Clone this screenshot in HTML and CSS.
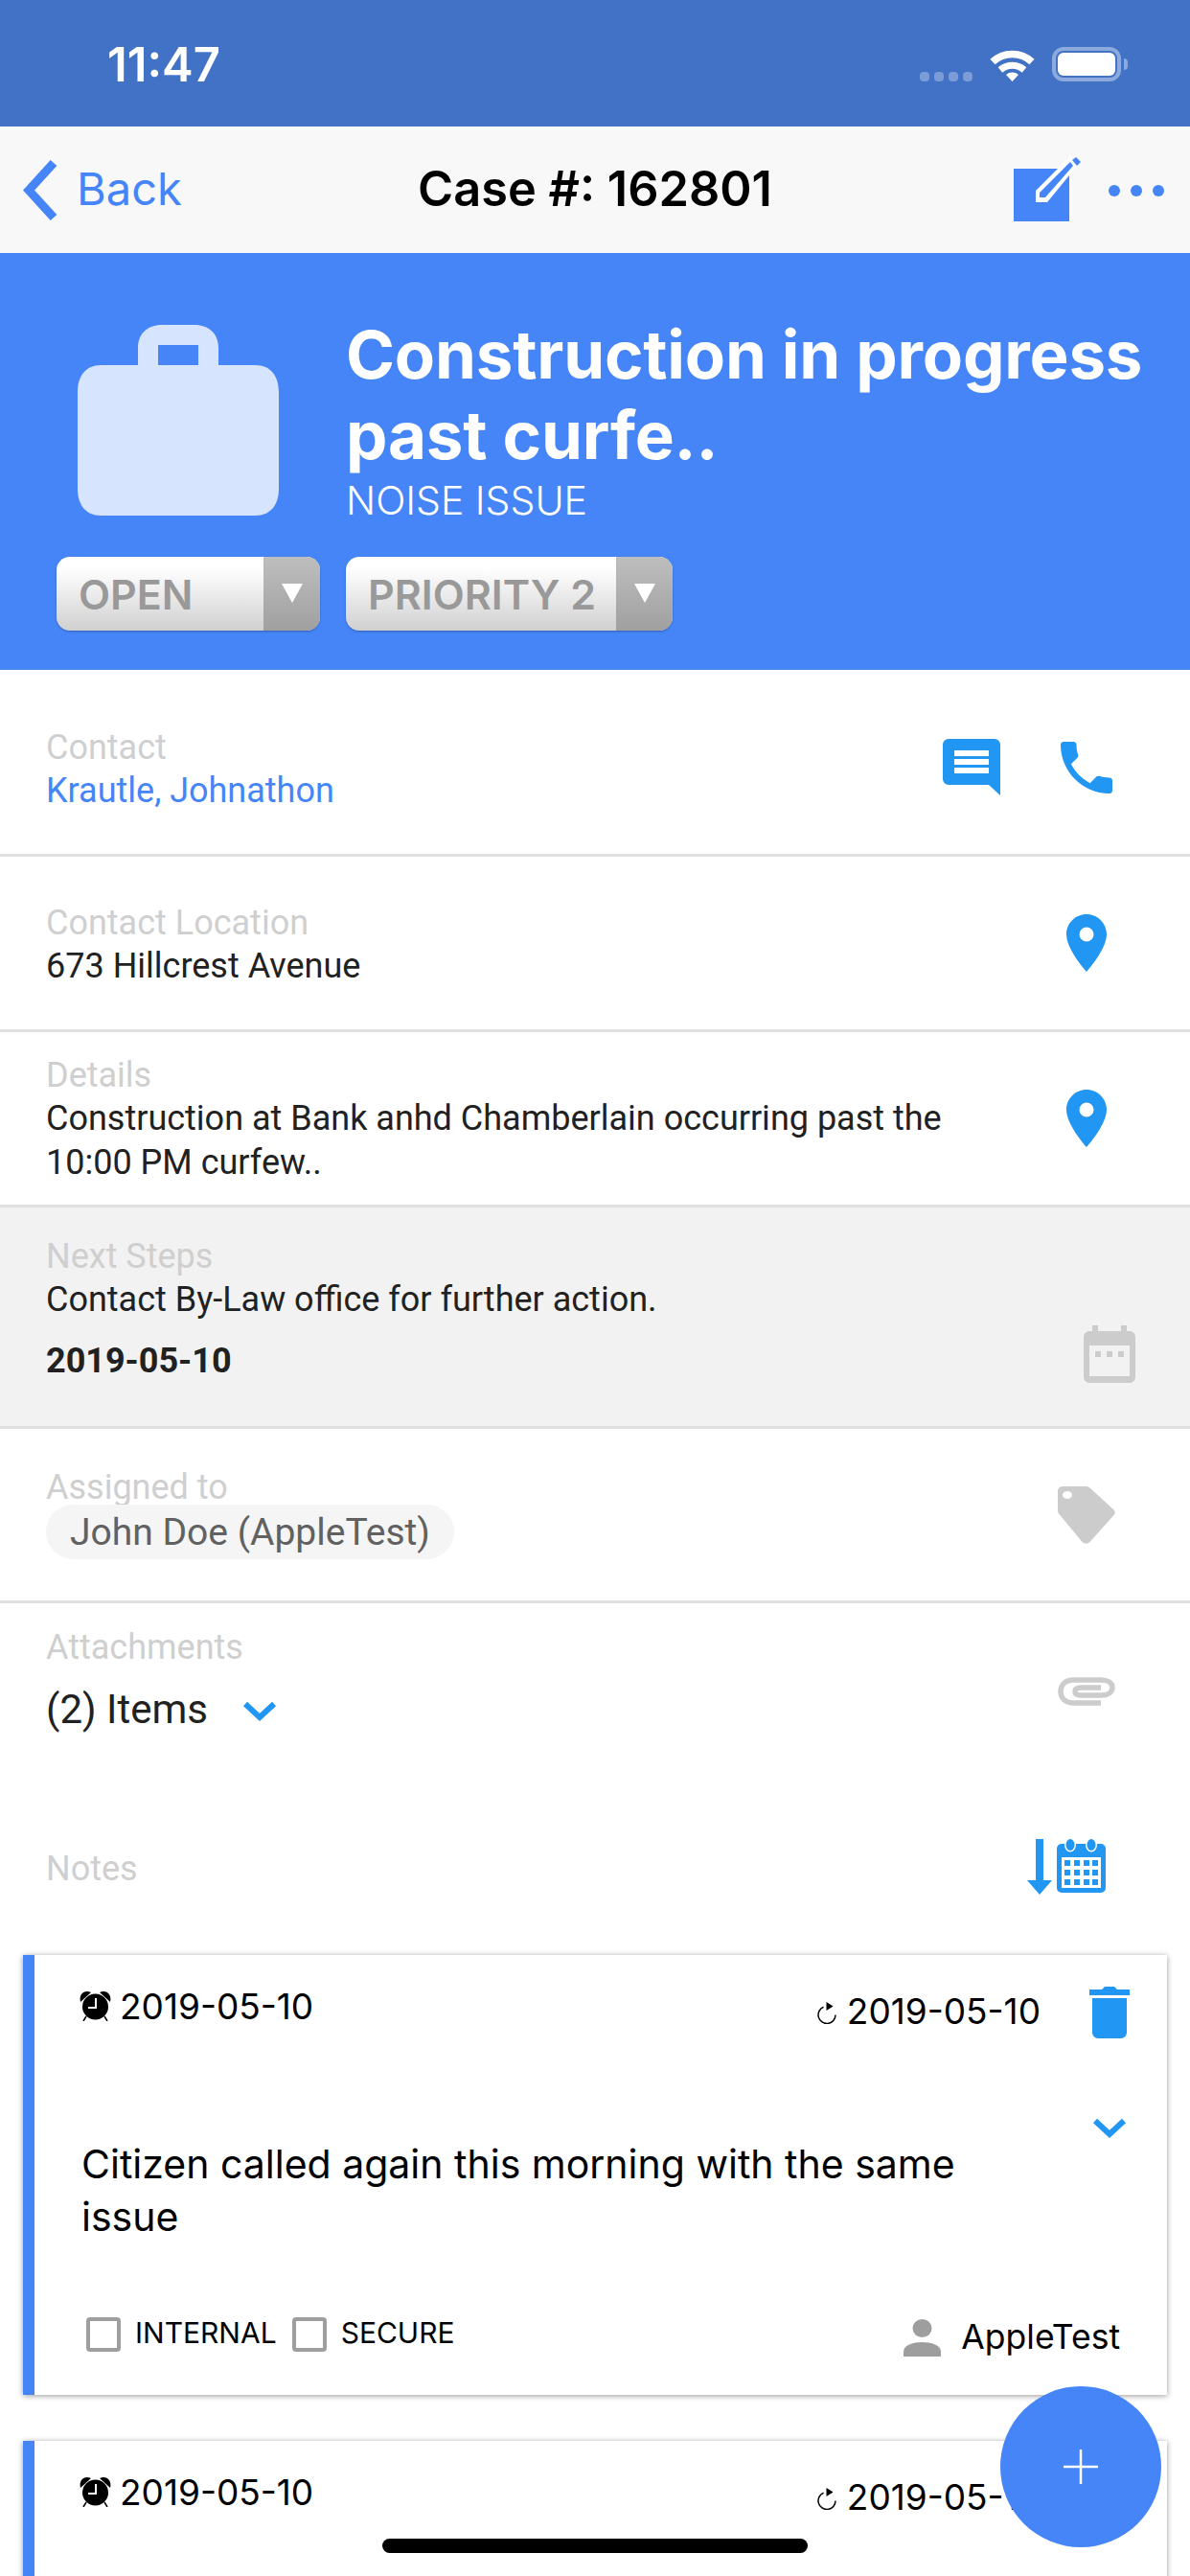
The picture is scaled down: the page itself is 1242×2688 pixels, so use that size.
FILE: index.html
```html
<!DOCTYPE html>
<html lang="en">
<head>
<meta charset="utf-8">
<title>Case #: 162801</title>
<link rel="stylesheet" href="styles.css">
</head>
<body>
<div class="page">
  <header class="statusbar">
    <span class="clock">11:47</span>
    <div class="status-icons">
      <div class="signal"><i></i><i></i><i></i><i></i></div>
      <svg class="wifi" viewBox="1032 49 50 36"><path d="M1036 64.500a30 30 0 0 1 41 0" fill="none" stroke="#fff" stroke-width="7.500"/><path d="M1044 73a19 19 0 0 1 25 0" fill="none" stroke="#fff" stroke-width="7"/><path d="M1050 78a10 10 0 0 1 13 0l-6.500 7z" fill="#fff"/></svg>
      <div class="battery"><div class="battery-fill"></div></div>
      <div class="battery-nub"></div>
    </div>
  </header>

  <nav class="navbar">
    <div class="nav-back">
      <svg class="back-chevron" viewBox="0 0 38 63"><path d="M32 3 6 31.500 32 60" fill="none" stroke="#4585f7" stroke-width="9"/></svg>
      <span>Back</span>
    </div>
    <div class="nav-title">Case #: 162801</div>
    <div class="nav-actions">
      <svg class="edit-icon" viewBox="1057 160 73 72"><rect x="1057" y="176" width="58" height="55" fill="#4585f7"/><path d="M1080 199 1116 163 1124 172 1092 211H1080z" fill="#fff"/><path d="M1084 201 1116 169 1119 173 1090 206H1084z" fill="#4585f7"/><path d="M1118 167l4-3 5 5-4 4z" fill="#4585f7"/></svg>
      <svg class="more-icon" viewBox="0 0 58 12"><circle cx="6" cy="6" r="6"/><circle cx="29" cy="6" r="6"/><circle cx="52" cy="6" r="6"/></svg>
    </div>
  </nav>

  <section class="hero">
    <div class="hero-top">
      <svg class="briefcase" viewBox="0 0 210 199"><path d="M63 42V24C63 9 73 0 88 0h34c15 0 25 9 25 24v18h39c15 0 24 11 24 28v101c0 17-9 28-24 28H24C9 199 0 188 0 171V70c0-17 9-28 24-28zm21 0h42V21H84z" fill="#d6e4fe" fill-rule="evenodd"/></svg>
      <div class="hero-text">
        <h1 class="hero-title">Construction in progress<br>past curfe..</h1>
        <div class="hero-sub">NOISE ISSUE</div>
      </div>
    </div>
    <div class="hero-selects">
      <div class="select select-status"><span class="select-label">OPEN</span><span class="select-arrow"><i></i></span></div>
      <div class="select select-priority"><span class="select-label">PRIORITY 2</span><span class="select-arrow"><i></i></span></div>
    </div>
  </section>

  <section class="row row-contact">
    <div>
      <div class="label">Contact</div>
      <div class="value value-link">Krautle, Johnathon</div>
    </div>
    <div class="row-icons">
      <svg class="icon-chat" viewBox="0 0 60 59"><path d="M6 0h48a6 6 0 0 1 6 6v53L48 48H6a6 6 0 0 1-6-6V6a6 6 0 0 1 6-6z" fill="#2196f3"/><path d="M12 12h36v6H12zM12 21h36v6H12zM12 30h36v6H12z" fill="#fff"/></svg>
      <svg class="icon-phone" viewBox="3 3 18 18"><path class="blue" d="M6.620 10.790c1.440 2.830 3.760 5.140 6.590 6.590l2.200-2.200c.27-.27.67-.36 1.020-.24 1.120.37 2.330.57 3.570.57.55 0 1 .45 1 1V20c0 .55-.45 1-1 1-9.390 0-17-7.610-17-17 0-.55.45-1 1-1h3.500c.55 0 1 .45 1 1 0 1.250.2 2.450.57 3.570.11.35.03.74-.25 1.020l-2.200 2.200z"/></svg>
    </div>
  </section>

  <section class="row row-location">
    <div>
      <div class="label">Contact Location</div>
      <div class="value">673 Hillcrest Avenue</div>
    </div>
    <div class="row-icons">
      <svg class="icon-pin" viewBox="5 2 14 20"><path class="blue" fill-rule="evenodd" d="M12 2C8.130 2 5 5.130 5 9c0 5.250 7 13 7 13s7-7.750 7-13c0-3.870-3.130-7-7-7zm0 9.500a2.500 2.500 0 0 1 0-5 2.500 2.500 0 0 1 0 5z"/></svg>
    </div>
  </section>

  <section class="row row-details">
    <div>
      <div class="label">Details</div>
      <div class="value">Construction at Bank anhd Chamberlain occurring past the<br>10:00 PM curfew..</div>
    </div>
    <div class="row-icons">
      <svg class="icon-pin" viewBox="5 2 14 20"><path class="blue" fill-rule="evenodd" d="M12 2C8.130 2 5 5.130 5 9c0 5.250 7 13 7 13s7-7.750 7-13c0-3.870-3.130-7-7-7zm0 9.500a2.500 2.500 0 0 1 0-5 2.500 2.500 0 0 1 0 5z"/></svg>
    </div>
  </section>

  <section class="row row-next">
    <div>
      <div class="label">Next Steps</div>
      <div class="value">Contact By-Law office for further action.</div>
      <div class="value value-date">2019-05-10</div>
    </div>
    <div class="row-icons">
      <svg class="icon-cal" viewBox="0 0 54 60"><path d="M9 0h6v6h24V0h6v6h3a6 6 0 0 1 6 6v42a6 6 0 0 1-6 6H6a6 6 0 0 1-6-6V12a6 6 0 0 1 6-6h3z" fill="#ccc"/><path d="M6 21h42v32H6z" fill="#f2f2f2"/><path d="M12 27h6v6h-6zM24 27h6v6h-6zM36 27h6v6h-6z" fill="#ccc"/></svg>
    </div>
  </section>

  <section class="row row-assigned">
    <div>
      <div class="label">Assigned to</div>
      <div class="chip">John Doe (AppleTest)</div>
    </div>
    <div class="row-icons">
      <svg class="icon-tag" viewBox="0 0 60 60"><path d="M5 0h24c2 0 3 .5 4.500 1.500l25 23c1.500 1.500 1.500 4 0 5.500l-25 28c-2 2-6 2-8 0L1.500 29C.5 28 0 27 0 25V5a5 5 0 0 1 5-5zm5 5a5 4 0 1 0 .01 0z" fill="#ccc" fill-rule="evenodd"/></svg>
    </div>
  </section>

  <section class="row row-attachments">
    <div>
      <div class="label">Attachments</div>
      <div class="items"><span>(2) Items</span>
        <svg class="items-chevron" viewBox="0 0 36 22"><path d="M3 3 18 17 33 3" fill="none" stroke="#2196f3" stroke-width="6"/></svg>
      </div>
    </div>
    <div class="row-icons">
      <svg class="icon-clip" viewBox="0 0 60 34"><path d="M45 29H16C8 29 3 24 3 17S8 5 16 5h29c7 0 12 3 12 8s-5 8-12 8H24c-4 0-6-1.500-6-4s2-4 6-4h21" fill="none" stroke="#ccc" stroke-width="5.500"/></svg>
    </div>
  </section>

  <section class="row row-notes">
    <div class="label">Notes</div>
    <div class="row-icons">
      <svg class="icon-notes" viewBox="1072 1918 82 59"><path class="blue" d="M1081 1919h8v43h9l-13 15-13-15h9z"/><rect class="blue" x="1103" y="1924" width="51" height="51" rx="5"/><ellipse cx="1117" cy="1925" rx="6" ry="7.500" fill="#fff"/><ellipse cx="1139" cy="1925" rx="6" ry="7.500" fill="#fff"/><ellipse class="blue" cx="1117" cy="1925" rx="4.500" ry="6"/><ellipse class="blue" cx="1139" cy="1925" rx="4.500" ry="6"/><rect x="1108" y="1938" width="41" height="32" fill="#fff"/><path class="blue" d="M1111 1941h6v6h-6zM1121 1941h6v6h-6zM1131 1941h6v6h-6zM1140 1941h6v6h-6zM1111 1951h6v6h-6zM1121 1951h6v6h-6zM1131 1951h6v6h-6zM1140 1951h6v6h-6zM1111 1961h6v6h-6zM1121 1961h6v6h-6zM1131 1961h6v6h-6zM1140 1961h6v6h-6z"/></svg>
    </div>
  </section>

  <article class="card">
    <div class="card-head">
      <div class="due">
        <svg class="icon-alarm" viewBox="0 0 33 32"><path d="M1 12C-1 4 5-1 12 2zM32 12c2-8-4-13-11-10z"/><circle cx="16.500" cy="17" r="13.500"/><path d="M16 8h2v11H9v-2h7z" fill="#fff"/><path d="M7 27 4 32M26 27l3 5" stroke="#000" stroke-width="1.500"/></svg>
        <span>2019-05-10</span>
      </div>
      <div class="card-head-right">
        <div class="repeat">
          <svg class="icon-repeat" viewBox="0 0 20 23"><path d="M6.500 5.200A9 9 0 1 0 19 13.500" fill="none" stroke="#000" stroke-width="1.500"/><path d="M9.500 0l7 4.500-7 4.500z"/></svg>
          <span>2019-05-10</span>
        </div>
        <svg class="icon-trash" viewBox="0 0 42 54"><path class="blue" d="M0 3h13l3-3h10l3 3h13v6H0zM3 12h36v36a6 6 0 0 1-6 6H9a6 6 0 0 1-6-6z"/></svg>
      </div>
    </div>
    <div class="card-body">
      <p class="card-text">Citizen called again this morning with the same issue</p>
      <svg class="card-chevron" viewBox="0 0 36 22"><path d="M3 3 18 17 33 3" fill="none" stroke="#2196f3" stroke-width="6"/></svg>
    </div>
    <div class="card-foot">
      <div class="checks">
        <span class="checkbox"></span><span class="check-label">INTERNAL</span>
        <span class="checkbox"></span><span class="check-label">SECURE</span>
      </div>
      <div class="author">
        <svg class="icon-person" viewBox="0 0 39 39"><ellipse cx="19.500" cy="9.500" rx="10" ry="9.500" fill="#9e9e9e"/><path d="M0 39v-5c0-7 10-10 19.500-10S39 27 39 34v5z" fill="#9e9e9e"/></svg>
        <span>AppleTest</span>
      </div>
    </div>
  </article>

  <article class="card card-partial">
    <div class="card-head">
      <div class="due">
        <svg class="icon-alarm" viewBox="0 0 33 32"><path d="M1 12C-1 4 5-1 12 2zM32 12c2-8-4-13-11-10z"/><circle cx="16.500" cy="17" r="13.500"/><path d="M16 8h2v11H9v-2h7z" fill="#fff"/><path d="M7 27 4 32M26 27l3 5" stroke="#000" stroke-width="1.500"/></svg>
        <span>2019-05-10</span>
      </div>
      <div class="card-head-right">
        <div class="repeat">
          <svg class="icon-repeat" viewBox="0 0 20 23"><path d="M6.500 5.200A9 9 0 1 0 19 13.500" fill="none" stroke="#000" stroke-width="1.500"/><path d="M9.500 0l7 4.500-7 4.500z"/></svg>
          <span>2019-05-10</span>
        </div>
        <svg class="icon-trash" viewBox="0 0 42 54"><path class="blue" d="M0 3h13l3-3h10l3 3h13v6H0zM3 12h36v36a6 6 0 0 1-6 6H9a6 6 0 0 1-6-6z"/></svg>
      </div>
    </div>
  </article>

  <button class="fab" aria-label="Add"><svg class="fab-plus" viewBox="0 0 36 36"><path d="M18 0v36M0 18h36" stroke="#fff" stroke-width="2.500"/></svg></button>
  <div class="home-indicator"></div>
</div>
</body>
</html>
```
FILE: styles.css
```css
* { box-sizing: border-box; }
html, body { margin: 0; padding: 0; background: #fff; }
.page {
  position: relative;
  width: 1242px;
  height: 2688px;
  overflow: hidden;
  font-family: Roboto, "Liberation Sans", sans-serif;
  color: #212121;
}
svg { display: block; flex: none; }
.blue { fill: #2196f3; }

/* status bar */
.statusbar {
  height: 132px;
  background: #4272c5;
  display: flex;
  justify-content: space-between;
  padding: 40px 0 0 112px;
  color: #fff;
}
.clock { font: 600 49px/56px Inter, sans-serif; }
.status-icons { display: flex; align-items: flex-end; height: 45px; padding-right: 65px; }
.signal { display: flex; gap: 5px; margin: 0 17px 0 0; }
.signal i { width: 10px; height: 10px; border-radius: 4px; background: rgba(255,255,255,.3); }
.wifi { width: 50px; height: 36px; margin-right: 16px; }
.battery {
  width: 72px; height: 36px;
  border: 4px solid rgba(255,255,255,.4);
  border-radius: 12px;
  padding: 2px;
}
.battery-fill { width: 100%; height: 100%; background: #fff; border-radius: 6px; }
.battery-nub {
  width: 4px; height: 12px; margin: 0 0 12px 3px;
  background: rgba(255,255,255,.4);
  border-radius: 0 6px 6px 0;
}

/* nav */
.navbar {
  position: relative;
  height: 132px;
  background: #f8f8f8;
  display: flex;
  align-items: center;
  justify-content: space-between;
}
.nav-back { display: flex; align-items: center; gap: 18px; padding-left: 24px; font: 400 47px/60px Inter, sans-serif; color: #4585f7; }
.nav-back span { margin-top: -3px; }
.back-chevron { width: 38px; height: 63px; }
.nav-title { font: 600 50.5px/60px Inter, sans-serif; color: #000; position: absolute; left: 0; right: 0; top: 35px; text-align: center; }
.nav-actions { display: flex; align-items: center; gap: 26px; padding: 0 27px 0 0; }
.edit-icon { width: 73px; height: 72px; margin-top: -4px; }
.more-icon { width: 58px; height: 12px; fill: #4585f7; margin-top: 1px; }

/* hero */
.hero { height: 435px; background: #4585f7; padding: 64px 0 0 59px; }
.hero-top { display: flex; height: 220px; }
.briefcase { width: 210px; height: 199px; margin: 11px 70px 0 22px; }
.hero-title { margin: 0; font: 700 69px/84px Inter, sans-serif; color: #fff; letter-spacing: -.2px; }
.hero-sub { font: 300 41px/52px Inter, sans-serif; color: #fff; }
.hero-selects { display: flex; gap: 27px; margin-top: 33px; }
.select {
  display: flex;
  justify-content: space-between;
  height: 77px;
  border-radius: 14px;
  overflow: hidden;
  background: linear-gradient(#fff 15%, #d0d0d0);
  box-shadow: 0 1px 2px rgba(40,60,110,.5);
}
.select-status { width: 275px; }
.select-priority { width: 341px; }
.select-label { padding-left: 23px; font: 600 43px/79px Inter, sans-serif; color: #999; }
.select-arrow {
  width: 59px;
  background: linear-gradient(#bebebe, #a0a0a0);
  display: flex;
  justify-content: center;
  padding-top: 28px;
}
.select-arrow i {
  width: 0; height: 0;
  border-left: 11px solid transparent;
  border-right: 11px solid transparent;
  border-top: 20px solid #fff;
}

/* rows */
.row {
  display: flex;
  justify-content: space-between;
  align-items: flex-start;
  padding-left: 48px;
  border-bottom: 3px solid #e0e0e0;
}
.label { font-size: 36px; line-height: 43px; color: #cfcfcf; }
.value { font-size: 36px; line-height: 46px; color: #212121; }
.value-link { color: #4585f7; }
.value-date { font-weight: 700; margin-top: 18px; }
.row-icons { display: flex; align-items: center; }
.row-contact { height: 195px; padding-top: 60px; }
.row-contact .row-icons { margin-top: 12px; padding-right: 81px; gap: 63px; }
.icon-chat { width: 60px; height: 59px; }
.icon-phone { width: 54px; height: 54px; }
.icon-pin { width: 42px; height: 60px; }
.row-location { height: 183px; padding-top: 48px; }
.row-location .row-icons { margin-top: 12px; padding-right: 87px; }
.row-details { height: 183px; padding-top: 24px; }
.row-details .row-icons { margin-top: 36px; padding-right: 87px; }
.row-next { height: 231px; padding-top: 30px; background: #f2f2f2; }
.row-next .row-icons { margin-top: 93px; padding-right: 57px; }
.icon-cal { width: 54px; height: 60px; }
.row-assigned { height: 182px; padding-top: 40px; }
.row-assigned .row-icons { margin-top: 20px; padding-right: 78px; }
.chip {
  display: inline-block;
  height: 57px;
  margin-top: -4px;
  padding: 0 25px;
  border-radius: 29px;
  background: #f5f5f5;
  color: #616161;
  font-size: 39px;
  line-height: 59px;
}
.icon-tag { width: 60px; height: 60px; }
.row-attachments { height: 227px; padding-top: 25px; border-bottom: 0; }
.row-attachments .row-icons { margin-top: 50px; padding-right: 78px; }
.items { display: flex; align-items: center; gap: 36px; margin-top: 20px; font-size: 42px; line-height: 46px; color: #212121; }
.items-chevron { width: 36px; height: 22px; margin-top: 4px; }
.icon-clip { width: 60px; height: 34px; }
.row-notes { height: 140px; padding-top: 18px; border-bottom: 0; }
.row-notes .label { margin-top: 11px; }
.row-notes .row-icons { padding-right: 88px; }
.icon-notes { width: 82px; height: 59px; }

/* cards */
.card {
  height: 459px;
  margin: 0 24px 48px;
  background: #fff;
  border-left: 12px solid #4585f7;
  box-shadow: 0 1px 6px rgba(0,0,0,.4);
  font-family: Inter, sans-serif;
  color: #000;
}
.card-partial { height: 300px; margin-bottom: 0; }
.card-head {
  display: flex;
  justify-content: space-between;
  align-items: flex-start;
  padding: 33px 39px 0 47px;
  height: 87px;
}
.due, .repeat { display: flex; align-items: center; font-size: 37px; line-height: 46px; }
.due { margin-top: -2px; gap: 9px; }
.icon-alarm { width: 33px; height: 32px; margin-top: -2px; }
.card-head-right { display: flex; align-items: flex-start; gap: 51px; }
.repeat { margin-top: 3px; gap: 11px; }
.icon-repeat { width: 20px; height: 23px; margin-top: 2px; }
.icon-trash { width: 42px; height: 54px; }
.card-body { display: flex; justify-content: space-between; align-items: flex-start; padding: 0 42px 0 49px; height: 270px; }
.card-text { margin: 104px 0 0; width: 980px; font-size: 41px; line-height: 55px; }
.card-chevron { width: 36px; height: 22px; margin-top: 83px; }
.card-foot { display: flex; justify-content: space-between; align-items: center; padding: 0 49px 0 54px; height: 78px; }
.checks { display: flex; align-items: center; }
.checkbox { width: 36px; height: 36px; border: 4px solid #9e9e9e; border-radius: 4px; margin-right: 15px; }
.check-label { font-size: 30px; line-height: 36px; margin-right: 16px; margin-top: -4px; }
.author { display: flex; align-items: center; gap: 21px; font-size: 35.5px; line-height: 46px; margin-top: 6px; }
.icon-person { width: 39px; height: 39px; }

/* overlays */
.fab {
  position: absolute;
  left: 1044px;
  top: 2490px;
  width: 168px;
  height: 168px;
  border: 0;
  padding: 0;
  border-radius: 50%;
  background: #4585f7;
  display: flex;
  align-items: center;
  justify-content: center;
}
.fab-plus { width: 36px; height: 36px; }
.home-indicator {
  position: absolute;
  left: 399px;
  top: 2649px;
  width: 444px;
  height: 15px;
  border-radius: 8px;
  background: #000;
}
```
